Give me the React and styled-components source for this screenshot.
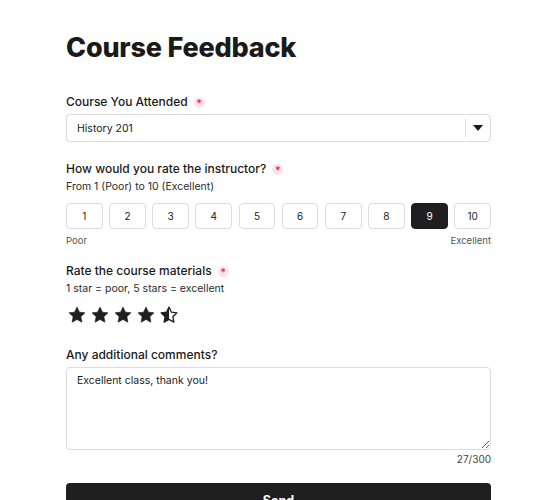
import styled, { createGlobalStyle } from "styled-components";

const GlobalStyle = createGlobalStyle`
  body {
    margin: 0;
    background: #fff;
    font-family: Inter, "Noto Sans", sans-serif;
    color: #1a1a1a;
  }
`;

const Page = styled.form`
  width: 425px;
  margin-left: 66px;
  padding-top: 30px;
`;

const Title = styled.h1`
  font-size: 27px;
  font-weight: 800;
  margin: 0 0 27px;
  line-height: 36px;
  letter-spacing: -0.2px;
`;

const Field = styled.div`
  margin-bottom: ${(p) => p.gap}px;
`;

const Label = styled.div`
  display: flex;
  align-items: center;
  gap: 6px;
  font-size: 12px;
  font-weight: 500;
  line-height: 18px;
  margin-bottom: ${(p) => (p.hint ? 1 : 3)}px;
`;

const Required = styled.span`
  display: inline-flex;
  align-items: center;
  justify-content: center;
  width: 11px;
  height: 11px;
  border-radius: 50%;
  background: #fde4ec;
  color: #e3175b;
  font-size: 11px;
  line-height: 1;
  padding-top: 3px;
  box-sizing: border-box;
`;

const Hint = styled.div`
  font-size: 10.5px;
  line-height: 16px;
  color: #2a2a2a;
  margin-bottom: 8px;
`;

const SelectBox = styled.div`
  display: flex;
  align-items: center;
  height: 28px;
  border: 1px solid #dcdcdf;
  border-radius: 4px;
  box-sizing: border-box;
  font-size: 10.5px;
`;

const SelectValue = styled.div`
  flex: 1;
  padding-left: 10px;
`;

const Caret = styled.div`
  width: 24px;
  height: 18px;
  border-left: 1px solid #dcdcdf;
  display: flex;
  align-items: center;
  justify-content: center;
`;

const Scale = styled.div`
  display: grid;
  grid-template-columns: repeat(10, 1fr);
  gap: 6.5px;
`;

const ScaleButton = styled.button`
  height: 26px;
  border: 1px solid ${(p) => (p.active ? "#1f1f1f" : "#dcdcdf")};
  background: ${(p) => (p.active ? "#1f1f1f" : "#fff")};
  color: ${(p) => (p.active ? "#fff" : "#1a1a1a")};
  border-radius: 4px;
  font-family: inherit;
  font-size: 10px;
  padding: 0;
`;

const ScaleEnds = styled.div`
  display: flex;
  justify-content: space-between;
  font-size: 9.5px;
  color: #555;
  margin-top: 6px;
`;

const Stars = styled.div`
  display: flex;
  gap: 3px;
  padding-left: 1px;
  margin-top: 6px;
`;

const TextArea = styled.textarea`
  display: block;
  width: 100%;
  height: 83px;
  box-sizing: border-box;
  border: 1px solid #dcdcdf;
  border-radius: 4px;
  padding: 6px 10px;
  font-family: inherit;
  font-size: 10.5px;
  color: #1a1a1a;
  resize: vertical;
`;

const Counter = styled.div`
  text-align: right;
  font-size: 10px;
  color: #444;
  margin-top: 3px;
`;

const SendButton = styled.button`
  width: 100%;
  height: 34px;
  border: none;
  border-radius: 4px;
  background: #1f1f1f;
  color: #fff;
  font-family: inherit;
  font-size: 12.5px;
  font-weight: 700;
  margin-top: 18px;
`;

const STAR = "M12 2.5l2.9 6.1 6.6.8-4.9 4.6 1.3 6.6L12 17.3l-5.9 3.3 1.3-6.6-4.9-4.6 6.6-.8z";

const Star = ({ half }) => (
  <svg width="20" height="20" viewBox="0 0 24 24">
    {half ? (
      <>
        <defs>
          <clipPath id="half">
            <rect x="0" y="0" width="12" height="24" />
          </clipPath>
        </defs>
        <path d={STAR} fill="none" stroke="#1f1f1f" strokeWidth="1.6" strokeLinejoin="round" />
        <path d={STAR} fill="#1f1f1f" clipPath="url(#half)" />
      </>
    ) : (
      <path d={STAR} fill="#1f1f1f" stroke="#1f1f1f" strokeWidth="0.8" strokeLinejoin="round" />
    )}
  </svg>
);

export default function App() {
  return (
    <>
      <GlobalStyle />
      <Page onSubmit={(e) => e.preventDefault()}>
        <Title>Course Feedback</Title>

        <Field gap={18}>
          <Label>
            Course You Attended <Required>*</Required>
          </Label>
          <SelectBox>
            <SelectValue>History 201</SelectValue>
            <Caret>
              <svg width="10" height="6" viewBox="0 0 10 6">
                <path d="M0 0h10L5 6z" fill="#1a1a1a" />
              </svg>
            </Caret>
          </SelectBox>
        </Field>

        <Field gap={16}>
          <Label hint>
            How would you rate the instructor? <Required>*</Required>
          </Label>
          <Hint>From 1 (Poor) to 10 (Excellent)</Hint>
          <Scale>
            {[1, 2, 3, 4, 5, 6, 7, 8, 9, 10].map((n) => (
              <ScaleButton type="button" key={n} active={n === 9}>
                {n}
              </ScaleButton>
            ))}
          </Scale>
          <ScaleEnds>
            <span>Poor</span>
            <span>Excellent</span>
          </ScaleEnds>
        </Field>

        <Field gap={21}>
          <Label hint>
            Rate the course materials <Required>*</Required>
          </Label>
          <Hint>1 star = poor, 5 stars = excellent</Hint>
          <Stars>
            {[1, 2, 3, 4].map((n) => (
              <Star key={n} />
            ))}
            <Star half />
          </Stars>
        </Field>

        <Field gap={0}>
          <Label>Any additional comments?</Label>
          <TextArea defaultValue="Excellent class, thank you!" />
          <Counter>27/300</Counter>
        </Field>

        <SendButton type="submit">Send</SendButton>
      </Page>
    </>
  );
}
